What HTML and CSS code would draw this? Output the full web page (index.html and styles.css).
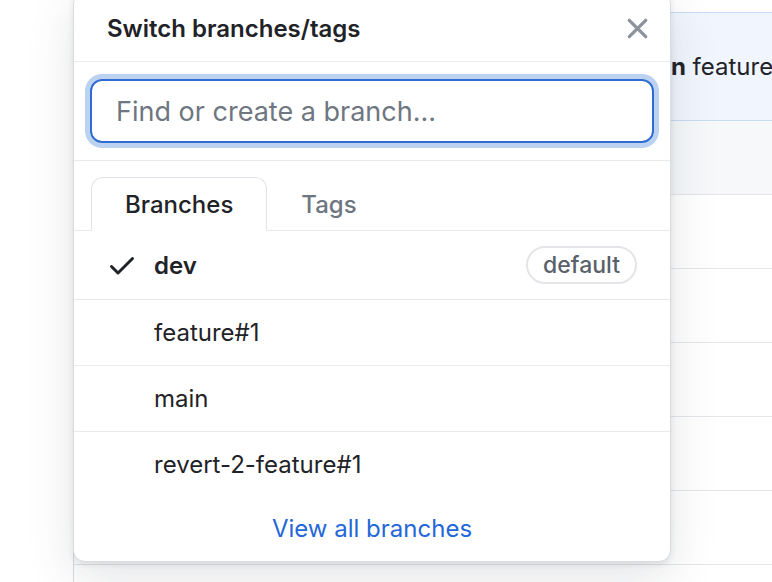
FILE: index.html
```html
<!DOCTYPE html>
<html>
<head>
<meta charset="utf-8">
<link rel="stylesheet" href="styles.css">
</head>
<body>
<div class="page">
  <div class="repo">
    <div class="banner"><span class="banner-text">Your recently pushed branch <b>main</b> feature#1</span></div>
    <div class="file-head"></div>
    <div class="file-row"></div>
    <div class="file-row"></div>
    <div class="file-row"></div>
    <div class="file-row"></div>
    <div class="file-row"></div>
    <div class="file-row"></div>
  </div>

  <div class="dropdown">
    <div class="dd-header">
      <span class="dd-title">Switch branches/tags</span>
      <svg class="dd-close" viewBox="0 0 16 16" width="35" height="35"><path fill="currentColor" d="M3.72 3.72a.75.75 0 0 1 1.06 0L8 6.94l3.22-3.22a.749.749 0 0 1 1.275.326.749.749 0 0 1-.215.734L9.06 8l3.22 3.22a.749.749 0 0 1-.326 1.275.749.749 0 0 1-.734-.215L8 9.06l-3.22 3.22a.751.751 0 0 1-1.042-.018.751.751 0 0 1-.018-1.042L6.94 8 3.72 4.78a.75.75 0 0 1 0-1.06Z"/></svg>
    </div>
    <div class="dd-filter">
      <div class="dd-input">Find or create a branch...</div>
    </div>
    <div class="dd-tabs">
      <div class="dd-tab active">Branches</div>
      <div class="dd-tab">Tags</div>
    </div>
    <div class="dd-list">
      <div class="dd-item current">
        <svg class="dd-check" viewBox="0 0 16 16" width="32" height="32"><path fill="currentColor" d="M13.78 4.22a.75.75 0 0 1 0 1.06l-7.25 7.25a.75.75 0 0 1-1.06 0L2.22 9.28a.751.751 0 0 1 .018-1.042.751.751 0 0 1 1.042-.018L6 10.94l6.72-6.72a.75.75 0 0 1 1.06 0Z"/></svg>
        <span class="dd-name">dev</span>
        <span class="dd-badge">default</span>
      </div>
      <div class="dd-item"><span class="dd-spacer"></span><span class="dd-name">feature#1</span></div>
      <div class="dd-item"><span class="dd-spacer"></span><span class="dd-name">main</span></div>
      <div class="dd-item last"><span class="dd-spacer"></span><span class="dd-name">revert-2-feature#1</span></div>
    </div>
    <div class="dd-footer"><a class="dd-link">View all branches</a></div>
  </div>
</div>
</body>
</html>
```
FILE: styles.css
```css
* { box-sizing: border-box; }
html, body { margin: 0; padding: 0; background: #ffffff; }
body {
  font-family: Inter, "Noto Sans", "Liberation Sans", sans-serif;
  color: #1f2328;
}
.page {
  position: relative;
  width: 772px;
  height: 582px;
  overflow: hidden;
}
.repo {
  margin-left: 73px;
  margin-top: 12px;
  border-left: 1px solid #d8dbe0;
  height: 570px;
}
.banner {
  height: 109px;
  background: #f1f6fe;
  border-top: 1px solid #c6dbf5;
  border-bottom: 1px solid #c6dbf5;
  display: flex;
  align-items: center;
  padding-left: 220px;
  white-space: nowrap;
  overflow: hidden;
  font-size: 24px;
}
.banner b { font-weight: 700; }
.file-head {
  height: 74px;
  background: #f6f8fa;
  border-bottom: 1px solid #e4e6ea;
}
.file-row {
  height: 74px;
  border-bottom: 1px solid #e4e6ea;
}

.dropdown {
  position: absolute;
  left: 73px;
  top: -8px;
  width: 598px;
  background: #ffffff;
  border: 1px solid #d9dce1;
  border-radius: 12px;
  box-shadow: 0 2px 6px rgba(31, 35, 40, 0.10), 0 16px 48px rgba(66, 74, 83, 0.14);
  display: flex;
  flex-direction: column;
}
.dd-header {
  height: 69px;
  padding: 3px 15px 0 33px;
  display: flex;
  align-items: center;
  justify-content: space-between;
  border-bottom: 1px solid #e8e9ed;
}
.dd-title {
  font-size: 24px;
  font-weight: 600;
}
.dd-close { color: #8c939c; }
.dd-filter {
  padding: 17px 16px;
  border-bottom: 1px solid #e8e9ed;
}
.dd-input {
  height: 64px;
  border: 2px solid #2f6bd0;
  border-radius: 12px;
  box-shadow: 0 0 0 5px #bcd2f1;
  display: flex;
  align-items: center;
  padding-left: 24px;
  font-size: 27px;
  color: #6e7681;
}
.dd-tabs {
  display: flex;
  padding: 16px 16px 0 17px;
  border-bottom: 1px solid #e8e9ed;
}
.dd-tab {
  height: 54px;
  margin-bottom: -1px;
  padding: 0 33px 0 33px;
  display: flex;
  align-items: center;
  font-size: 24px;
  font-weight: 500;
  color: #6e7681;
  border: 1px solid transparent;
  border-radius: 12px 12px 0 0;
}
.dd-tab.active {
  color: #1f2328;
  background: #ffffff;
  border-color: #e1e3e8;
  border-bottom-color: #ffffff;
}
.dd-item {
  display: flex;
  align-items: center;
  height: 66px;
  padding: 0 33px 0 32px;
  border-bottom: 1px solid #e8e9ed;
  font-size: 24px;
}
.dd-item.current { height: 69px; }
.dd-item.last { border-bottom: none; height: 65px; }
.dd-check { color: #1f2328; flex: none; }
.dd-spacer { width: 32px; flex: none; }
.dd-name { margin-left: 16px; }
.dd-item.current .dd-name { font-weight: 600; }
.dd-badge {
  margin-left: auto;
  height: 38px;
  padding: 0 15px;
  border: 2px solid #e3e5e9;
  border-radius: 19px;
  display: flex;
  align-items: center;
  font-size: 23px;
  font-weight: 500;
  color: #59616b;
}
.dd-footer {
  height: 64px;
  display: flex;
  align-items: center;
  justify-content: center;
  padding-bottom: 1px;
}
.dd-link {
  font-size: 24px;
  color: #2467d8;
}
```
